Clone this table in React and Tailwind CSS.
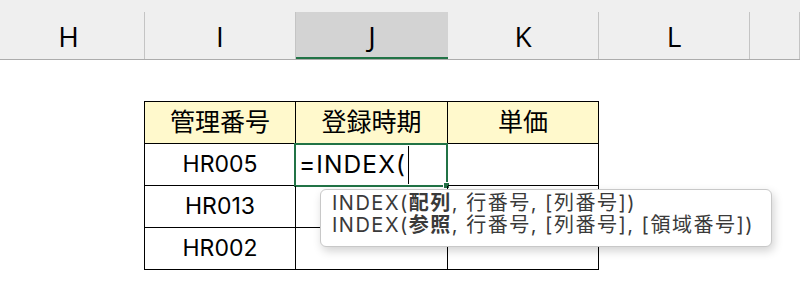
import React from "react";

const cellFont = {
  fontFamily: 'Inter, "Noto Sans CJK JP", sans-serif',
};

const columns = [
  { label: "H", w: "w-[152px]", active: false },
  { label: "I", w: "w-[151px]", active: false },
  { label: "J", w: "w-[152px]", active: true },
  { label: "K", w: "w-[151px]", active: false },
  { label: "L", w: "w-[151px]", active: false },
  { label: "", w: "flex-1", active: false },
];

const widths = ["w-[151px]", "w-[152px]", "w-[151px]"];

function Cell({ i, children, className = "" }) {
  return (
    <div
      className={`${widths[i]} h-[42px] border-r border-b border-black flex items-center justify-center relative ${className}`}
    >
      {children}
    </div>
  );
}

export default function App() {
  return (
    <div className="w-[800px] h-[307px] bg-white overflow-hidden relative">
      {/* column header strip */}
      <div className="h-[60px] bg-[#efefef] border-b border-[#acacac] flex flex-col">
        <div className="h-[12px]" />
        <div className="flex flex-1 -ml-[7px]">
          {columns.map((c, idx) => (
            <div
              key={idx}
              className={`${c.w} h-full flex items-center justify-center text-[28px] text-black ${
                c.active
                  ? "bg-[#d3d3d3] border-b-2 border-[#217346] text-[#1e5e3a] pt-[2px]"
                  : "border-r border-[#c4c4c4]"
              }`}
              style={{ fontFamily: '"Open Sans", "Noto Sans", sans-serif' }}
            >
              {c.label}
            </div>
          ))}
        </div>
      </div>

      {/* sheet body */}
      <div className="pl-[144px] pt-[41px]">
        <div className="inline-flex flex-col border-l border-t border-black text-black" style={cellFont}>
          <div className="flex bg-[#fff9cc] text-[25px]">
            <Cell i={0}>管理番号</Cell>
            <Cell i={1}>登録時期</Cell>
            <Cell i={2}>単価</Cell>
          </div>
          <div className="flex text-[23px]">
            <Cell i={0}>HR005</Cell>
            <Cell i={1} className="justify-start">
              <span className="pl-[3px] text-[24.5px] tracking-[1.1px]">=INDEX(</span>
              <span className="absolute left-[112px] top-[2px] w-px h-[38px] bg-black" />
              <div className="absolute -left-[2px] -top-px w-[154px] h-[44px] border-2 border-[#217346]">
                <div className="absolute -right-[4px] -bottom-[4px] w-[7px] h-[7px] bg-[#217346] border border-white" />
              </div>
            </Cell>
            <Cell i={2} />
          </div>
          <div className="flex text-[23px]">
            <Cell i={0}>HR013</Cell>
            <Cell i={1} />
            <Cell i={2} />
          </div>
          <div className="flex text-[23px]">
            <Cell i={0}>HR002</Cell>
            <Cell i={1} />
            <Cell i={2} />
          </div>
        </div>
      </div>

      {/* function argument tooltip */}
      <div
        className="absolute left-[320px] top-[189px] w-[452px] h-[58px] bg-white border border-[#c8c8c8] rounded-[6px] shadow-[2px_4px_10px_rgba(0,0,0,0.18)] pl-[11px] pt-[2px] text-[20px] leading-[22px] text-[#3a3a3a] tracking-[1.5px]"
        style={cellFont}
      >
        <div>
          INDEX(<b>配列</b>, 行番号, [列番号])
        </div>
        <div>
          INDEX(<b>参照</b>, 行番号, [列番号], [領域番号])
        </div>
      </div>
    </div>
  );
}
